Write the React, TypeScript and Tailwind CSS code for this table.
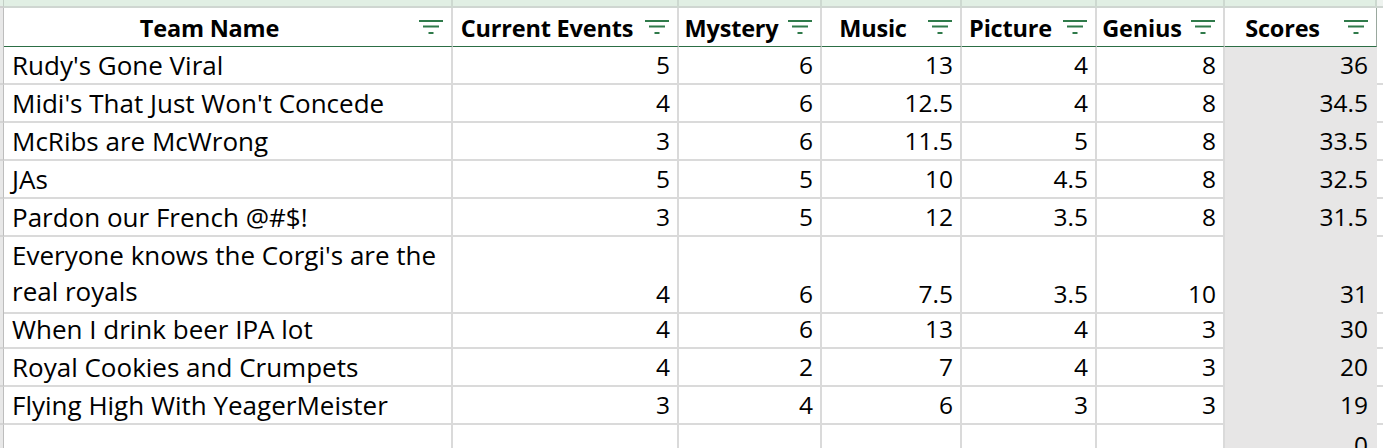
import React from "react";

const COLS = "grid grid-cols-[4px_449px_226px_143px_140px_135px_128px_152px_6px]";

type Row = { name: string; lines?: string[]; v: (string | number)[]; total: string | number; h?: string };

const rows: Row[] = [
  { name: "Rudy's Gone Viral", v: [5, 6, 13, 4, 8], total: 36 },
  { name: "Midi's That Just Won't Concede", v: [4, 6, 12.5, 4, 8], total: 34.5 },
  { name: "McRibs are McWrong", v: [3, 6, 11.5, 5, 8], total: 33.5 },
  { name: "JAs", v: [5, 5, 10, 4.5, 8], total: 32.5 },
  { name: "Pardon our French @#$!", v: [3, 5, 12, 3.5, 8], total: 31.5 },
  {
    name: "",
    lines: ["Everyone knows the Corgi's are the", "real royals"],
    v: [4, 6, 7.5, 3.5, 10],
    total: 31,
    h: "h-[74px]",
  },
  { name: "When I drink beer IPA lot", v: [4, 6, 13, 4, 3], total: 30 },
  { name: "Royal Cookies and Crumpets", v: [4, 2, 7, 4, 3], total: 20 },
  { name: "Flying High With YeagerMeister", v: [3, 4, 6, 3, 3], total: 19 },
];

function FilterIcon() {
  return (
    <svg width="24" height="14" viewBox="0 0 24 14" className="shrink-0">
      <rect x="0" y="0" width="24" height="2" fill="#2f7a4a" />
      <rect x="4" y="5.5" width="16" height="2" fill="#2f7a4a" />
      <rect x="9.5" y="12" width="5" height="2" fill="#2f7a4a" />
    </svg>
  );
}

function HeaderCell({ label, last }: { label: string; last?: boolean }) {
  return (
    <div
      className={`flex items-center pl-[4px] pr-[8px] border-b border-b-[#2c6e45] ${
        last ? "border-r border-r-[#9aa89e]" : "border-r-2 border-r-[#dadada]"
      }`}
    >
      <span className="flex-1 text-center font-bold whitespace-nowrap text-[23.5px] tracking-[-0.2px] pt-[2px] mr-[8px]">
        {label}
      </span>
      <FilterIcon />
    </div>
  );
}

export default function App() {
  const headers = ["Team Name", "Current Events", "Mystery", "Music", "Picture", "Genius", "Scores"];
  return (
    <div
      className="w-[1383px] h-[448px] overflow-hidden bg-white text-black text-[24.5px]"
      style={{ fontFamily: "'Open Sans', 'Noto Sans', sans-serif" }}
    >
      {/* column header strip */}
      <div className={`${COLS} h-[8px]`}>
        <div className="bg-[#e3efe6] border-r border-[#c3cfc6] border-b-2 border-b-[#d0d0d0]" />
        {[0, 1, 2, 3, 4, 5, 6].map((i) => (
          <div key={i} className="bg-[#e1efe4] border-r-2 border-r-[#cdd9d0] border-b-2 border-b-[#cfd6d1]" />
        ))}
        <div className="bg-[#eef3ef] border-b-2 border-b-[#cfd6d1]" />
      </div>

      {/* header row */}
      <div className={`${COLS} h-[39px] leading-[30px]`}>
        <div className="bg-[#e8e8e8] border-r border-[#bdbdbd]" />
        {headers.map((h, i) => (
          <HeaderCell key={h} label={h} last={i === headers.length - 1} />
        ))}
        <div className="bg-white" />
      </div>

      {/* data rows */}
      {rows.map((r, ri) => (
        <div key={ri} className={`${COLS} ${r.h ?? "h-[38px]"} leading-[30px]`}>
          <div className="bg-[#e8e8e8] border-r border-[#bdbdbd] border-b-2 border-b-[#d4d4d4]" />
          <div className="flex items-end pl-[8px] pb-[3px] border-r-2 border-b-2 border-[#dadada] whitespace-nowrap text-[26px]">
            {r.lines ? (
              <div className="leading-[36px] pb-0">
                {r.lines.map((l) => (
                  <div key={l}>{l}</div>
                ))}
              </div>
            ) : (
              r.name
            )}
          </div>
          {r.v.map((n, i) => (
            <div
              key={i}
              className="flex items-end justify-end pr-[7px] pb-[3px] border-r-2 border-b-2 border-[#dadada]"
            >
              {n}
            </div>
          ))}
          <div className="flex items-end justify-end pr-[9px] pb-[3px] bg-[#e7e6e6] border-b-2 border-[#e7e6e6]">
            {r.total}
          </div>
          <div className="border-b-2 border-[#dadada]" />
        </div>
      ))}

      {/* trailing row */}
      <div className={`${COLS} h-[38px] leading-[30px]`}>
        <div className="bg-[#e8e8e8] border-r border-[#bdbdbd]" />
        {[0, 1, 2, 3, 4, 5].map((i) => (
          <div key={i} className="border-r-2 border-[#dadada]" />
        ))}
        <div className="flex items-end justify-end pr-[9px] pb-[3px] bg-[#e7e6e6]">0</div>
        <div />
      </div>
    </div>
  );
}
